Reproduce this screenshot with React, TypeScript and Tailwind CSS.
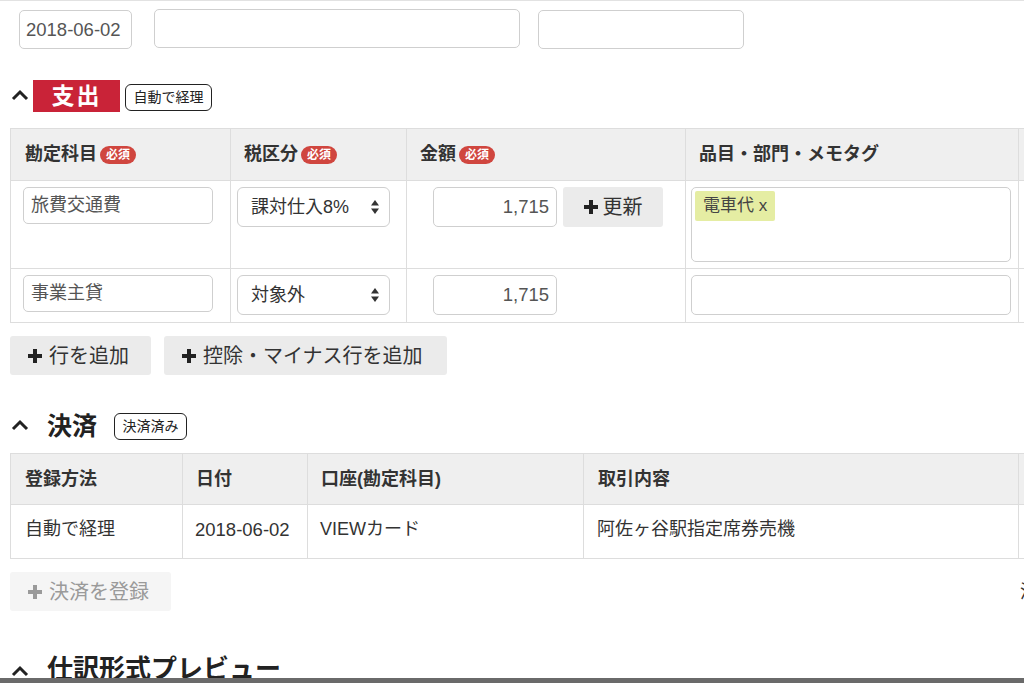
import React from 'react';

const FONT = "font-['Liberation_Sans','Noto_Sans_CJK_JP',sans-serif]";

function Chevron({ className = '' }: { className?: string }) {
  return (
    <svg width="18" height="12" viewBox="0 0 18 12" className={className}>
      <polyline points="2,10 9,3 16,10" fill="none" stroke="#222" strokeWidth="3" strokeLinejoin="miter" />
    </svg>
  );
}

function Plus({ color = '#222' }: { color?: string }) {
  return (
    <svg width="14" height="14" viewBox="0 0 14 14" className="shrink-0">
      <rect x="5" y="0" width="4" height="14" fill={color} />
      <rect x="0" y="5" width="14" height="4" fill={color} />
    </svg>
  );
}

function Required() {
  return (
    <span className="ml-[3px] inline-flex h-[18px] items-center rounded-full bg-[#d0463f] px-[6px] text-[12px] font-bold leading-none text-white">
      必須
    </span>
  );
}

function SelectArrows() {
  return (
    <svg width="10" height="16" viewBox="0 0 10 16" className="shrink-0">
      <polygon points="5,1 9,6.5 1,6.5" fill="#333" />
      <polygon points="5,15 9,9.5 1,9.5" fill="#333" />
    </svg>
  );
}

function Input({ value, className = '', right = false }: { value?: string; className?: string; right?: boolean }) {
  return (
    <div
      className={`flex items-center whitespace-nowrap rounded-[5px] border border-[#cfcfcf] bg-white px-[7px] text-[18px] text-[#555] ${right ? 'justify-end' : ''} ${className}`}
    >
      {value}
    </div>
  );
}

function Select({ value, className = '' }: { value: string; className?: string }) {
  return (
    <div className={`flex items-center justify-between rounded-[6px] border border-[#cfcfcf] bg-white pl-[13px] pr-[9px] text-[18px] text-[#333] ${className}`}>
      <span>{value}</span>
      <SelectArrows />
    </div>
  );
}

function GrayButton({ label, muted = false, className = '' }: { label: string; muted?: boolean; className?: string }) {
  return (
    <div
      className={`flex h-[39px] shrink-0 items-center gap-[7px] whitespace-nowrap rounded-[3px] px-[18px] text-[20px] ${muted ? 'bg-[#f5f5f5] text-[#9a9a9a]' : 'bg-[#ebebeb] text-[#333]'} ${className}`}
    >
      <Plus color={muted ? '#9a9a9a' : '#222'} />
      <span>{label}</span>
    </div>
  );
}

function OutlineBadge({ label, className = '' }: { label: string; className?: string }) {
  return (
    <span className={`inline-flex h-[27px] items-center whitespace-nowrap rounded-[6px] border border-[#222] bg-white px-[5px] text-[14px] text-[#222] ${className}`}>
      {label}
    </span>
  );
}

const th = 'border border-[#dddddd] bg-[#efefef] pl-[13px] text-left align-middle text-[18px] font-bold text-[#333]';
const td = 'border border-[#dddddd] align-top';

export default function App() {
  return (
    <div className={`relative h-[683px] w-[1024px] overflow-hidden bg-white text-[#333] ${FONT}`}>
      <div className="border-t border-[#e2e2e2]" />

      {/* top inputs */}
      <div className="mt-[8px] flex items-start pl-[19px]">
        <Input value="2018-06-02" className="mt-[1px] h-[39px] w-[113px] !px-[6px] !text-[18.5px] text-[#333]" />
        <Input className="ml-[22px] h-[39px] w-[366px]" />
        <Input className="ml-[18px] mt-[1px] h-[39px] w-[206px]" />
      </div>

      {/* 支出 */}
      <div className="mt-[31px] flex h-[32px] items-center pl-[11px]">
        <Chevron className="mt-[-2px]" />
        <div className="ml-[4px] flex h-[32px] w-[87px] items-center justify-center bg-[#c92338] text-[23px] font-bold tracking-[2px] text-white">
          支出
        </div>
        <OutlineBadge label="自動で経理" className="ml-[5px] mt-[2px] w-[87px] justify-center" />
      </div>

      <div className="mt-[16px] pl-[10px]">
        <table className="w-[1100px] table-fixed border-collapse">
          <colgroup>
            <col className="w-[220px]" />
            <col className="w-[176px]" />
            <col className="w-[279px]" />
            <col className="w-[333px]" />
            <col />
          </colgroup>
          <thead>
            <tr className="h-[52px]">
              <th className={`${th} !pl-[14px]`}>
                <span className="inline-flex items-center">勘定科目<Required /></span>
              </th>
              <th className={th}>
                <span className="inline-flex items-center">税区分<Required /></span>
              </th>
              <th className={th}>
                <span className="inline-flex items-center">金額<Required /></span>
              </th>
              <th className={th}>品目・部門・メモタグ</th>
              <th className={th}></th>
            </tr>
          </thead>
          <tbody>
            <tr className="h-[88px]">
              <td className={`${td} pl-[12px] pt-[6px]`}>
                <Input value="旅費交通費" className="h-[37px] w-[190px]" />
              </td>
              <td className={`${td} pl-[6px] pt-[6px]`}>
                <Select value="課対仕入8%" className="h-[40px] w-[153px]" />
              </td>
              <td className={`${td} pl-[26px] pt-[6px]`}>
                <div className="flex items-start gap-[6px]">
                  <Input value="1,715" right className="h-[40px] w-[124px] !text-[18.5px] text-[#333]" />
                  <div className="flex h-[40px] w-[100px] items-center justify-center gap-[5px] rounded-[3px] bg-[#ebebeb] text-[20px] text-[#333]">
                    <Plus />
                    <span>更新</span>
                  </div>
                </div>
              </td>
              <td className={`${td} pl-[5px] pt-[6px]`}>
                <div className="h-[75px] w-[320px] rounded-[5px] border border-[#cfcfcf] bg-white p-[3px]">
                  <span className="inline-flex h-[30px] items-center rounded-[2px] bg-[#e5eda3] px-[8px] text-[17px] text-[#444]">
                    電車代 x
                  </span>
                </div>
              </td>
              <td className={td}></td>
            </tr>
            <tr className="h-[54px]">
              <td className={`${td} pl-[12px] pt-[6px]`}>
                <Input value="事業主貸" className="h-[37px] w-[190px]" />
              </td>
              <td className={`${td} pl-[6px] pt-[6px]`}>
                <Select value="対象外" className="h-[40px] w-[153px]" />
              </td>
              <td className={`${td} pl-[26px] pt-[6px]`}>
                <Input value="1,715" right className="h-[40px] w-[124px] !text-[18.5px] text-[#333]" />
              </td>
              <td className={`${td} pl-[5px] pt-[6px]`}>
                <Input className="h-[40px] w-[320px]" />
              </td>
              <td className={td}></td>
            </tr>
          </tbody>
        </table>
      </div>

      <div className="mt-[13px] flex gap-[13px] pl-[10px]">
        <GrayButton label="行を追加" className="w-[141px]" />
        <GrayButton label="控除・マイナス行を追加" className="w-[283px]" />
      </div>

      {/* 決済 */}
      <div className="mt-[35px] flex h-[32px] items-center pl-[11px]">
        <Chevron className="mt-[-2px]" />
        <span className="ml-[18px] text-[25px] font-bold leading-none text-[#222]">決済</span>
        <OutlineBadge label="決済済み" className="ml-[17px] w-[73px] justify-center" />
      </div>

      <div className="mt-[11px] pl-[10px]">
        <table className="w-[1100px] table-fixed border-collapse">
          <colgroup>
            <col className="w-[172px]" />
            <col className="w-[125px]" />
            <col className="w-[276px]" />
            <col className="w-[435px]" />
            <col />
          </colgroup>
          <thead>
            <tr className="h-[51px]">
              <th className={`${th} !pl-[14px]`}>登録方法</th>
              <th className={th}>日付</th>
              <th className={th}>口座(勘定科目)</th>
              <th className={`${th} !pl-[14px]`}>取引内容</th>
              <th className={th}></th>
            </tr>
          </thead>
          <tbody>
            <tr className="h-[54px] text-[18px] text-[#333]">
              <td className="border border-[#dddddd] pb-[4px] pl-[14px] align-middle">自動で経理</td>
              <td className="border border-[#dddddd] pb-[4px] pl-[12px] align-middle !text-[18.5px]">2018-06-02</td>
              <td className="border border-[#dddddd] pb-[4px] pl-[12px] align-middle">VIEWカード</td>
              <td className="border border-[#dddddd] pb-[4px] pl-[13px] align-middle">阿佐ヶ谷駅指定席券売機</td>
              <td className="border border-[#dddddd]"></td>
            </tr>
          </tbody>
        </table>
      </div>

      <div className="mt-[13px] flex items-center pl-[10px]">
        <GrayButton label="決済を登録" muted className="w-[161px]" />
        <span className="ml-[849px] shrink-0 whitespace-nowrap pt-[2px] text-[18px] text-[#333]">決済</span>
      </div>

      {/* 仕訳形式プレビュー */}
      <div className="mt-[42px] flex h-[32px] items-center pl-[11px]">
        <Chevron className="mt-[4px]" />
        <span className="ml-[18px] text-[26px] font-bold leading-none text-[#222]">仕訳形式プレビュー</span>
      </div>

      <div className="absolute bottom-0 left-0 h-[5px] w-full bg-[#6a6a6a]" />
    </div>
  );
}
